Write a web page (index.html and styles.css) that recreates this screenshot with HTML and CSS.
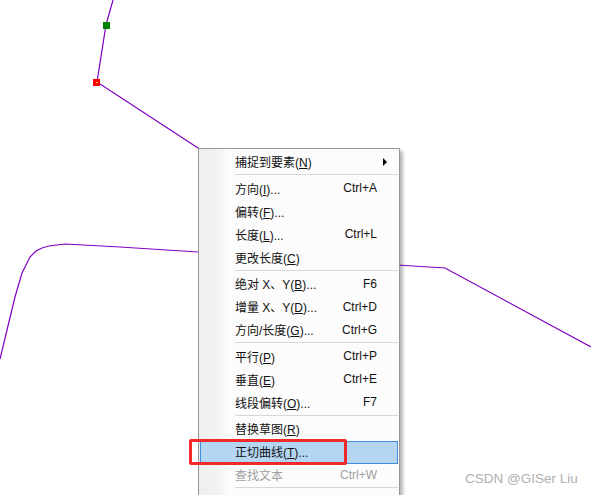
FILE: index.html
```html
<!DOCTYPE html>
<html>
<head>
<meta name="viewport" content="width=device-width, initial-scale=1">
<link rel="stylesheet" href="styles.css">
</head>
<body>

<svg class="canvas" width="591" height="495" viewBox="0 0 591 495">
  <polyline class="edge" points="113,0 106,25 97,82 198,148 260,189"/>
  <polyline class="edge" points="0,359 7,330 15,297 22,273 30,257 36,251 42,248 49,246 65,244 120,247 198,252 397,265 445,268 591,347"/>
  <rect x="103" y="22" width="7" height="7" fill="#008000"/>
  <rect x="93" y="79" width="7" height="7" fill="#ff0000"/>
  <rect x="96" y="82" width="2" height="1" fill="#c8c832"/>
</svg>

<div class="menu">
  <div class="item">
    <span class="label">捕捉到要素(<u>N</u>)</span>
    <span class="arrow"></span>
  </div>
  <div class="sep"></div>
  <div class="item"><span class="label">方向(<u>I</u>)...</span><span class="key">Ctrl+A</span></div>
  <div class="item"><span class="label">偏转(<u>F</u>)...</span></div>
  <div class="item"><span class="label">长度(<u>L</u>)...</span><span class="key">Ctrl+L</span></div>
  <div class="item"><span class="label">更改长度(<u>C</u>)</span></div>
  <div class="sep"></div>
  <div class="item"><span class="label">绝对 X、Y(<u>B</u>)...</span><span class="key">F6</span></div>
  <div class="item"><span class="label">增量 X、Y(<u>D</u>)...</span><span class="key">Ctrl+D</span></div>
  <div class="item"><span class="label">方向/长度(<u>G</u>)...</span><span class="key">Ctrl+G</span></div>
  <div class="sep"></div>
  <div class="item"><span class="label">平行(<u>P</u>)</span><span class="key">Ctrl+P</span></div>
  <div class="item"><span class="label">垂直(<u>E</u>)</span><span class="key">Ctrl+E</span></div>
  <div class="item"><span class="label">线段偏转(<u>O</u>)...</span><span class="key">F7</span></div>
  <div class="sep"></div>
  <div class="item"><span class="label">替换草图(<u>R</u>)</span></div>
  <div class="item active"><span class="label">正切曲线(<u>T</u>)...</span></div>
  <div class="item disabled"><span class="label">查找文本</span><span class="key">Ctrl+W</span></div>
  <div class="sep"></div>
  <div class="item"><span class="label">&nbsp;</span></div>
</div>

<div class="mark"></div>

<div class="watermark">CSDN @GISer Liu</div>

</body>
</html>
```

FILE: styles.css
```css
body {
    margin: 0;
    width: 591px;
    height: 495px;
    overflow: hidden;
    background: #fff;
    position: relative;
    font-family: "Liberation Sans", "Noto Sans CJK SC", sans-serif;
}

.canvas {
    position: absolute;
    top: 0;
    left: 0;
}

.edge {
    fill: none;
    stroke: #8000c0;
    stroke-width: 1.2;
}

.menu {
    position: absolute;
    left: 198px;
    top: 148px;
    width: 198px;
    height: 360px;
    padding: 2px 1px;
    border: 1px solid #979797;
    background: linear-gradient(to right, #eeeeee 0, #f3f3f3 20px, #fcfcfc 29px, #fcfcfc 100%);
    box-shadow: 3px 3px 3px rgba(0, 0, 0, 0.28);
    font-size: 12px;
    color: #111;
}

.item {
    height: 23px;
    display: flex;
    align-items: center;
    padding: 0 20px 2px 34px;
    box-sizing: border-box;
    border: 1px solid transparent;
}

.item .label {
    flex: 1;
    white-space: nowrap;
}

.item .key {
    white-space: nowrap;
}

.item u {
    text-decoration-thickness: 1px;
    text-underline-offset: 1px;
}

.item.active {
    background: #b5d6f3;
    border-color: #3d8fdc;
}

.item.disabled {
    color: #a0a0a0;
}

.arrow {
    width: 0;
    height: 0;
    margin-right: -10px;
    border-top: 4px solid transparent;
    border-bottom: 4px solid transparent;
    border-left: 4px solid #000;
}

.sep {
    height: 1px;
    margin: 0 0 2.5px 35px;
    background: #d7d7d7;
}

.mark {
    position: absolute;
    left: 189px;
    top: 439px;
    width: 152px;
    height: 20px;
    border: 3px solid #f02a2a;
    border-radius: 2px;
}

.watermark {
    position: absolute;
    left: 465px;
    top: 471px;
    font-size: 13.5px;
    color: #b0b0b0;
    font-family: "Liberation Sans", sans-serif;
}
```
